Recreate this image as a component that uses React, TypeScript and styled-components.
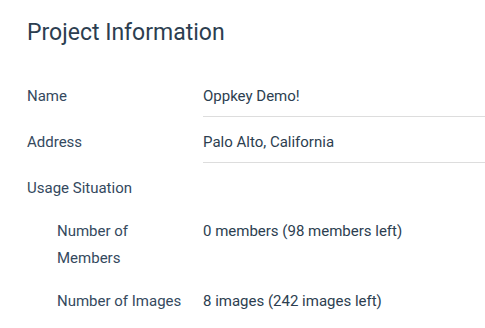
import * as React from 'react'
import styled, { createGlobalStyle } from 'styled-components'

const GlobalStyle = createGlobalStyle`
  body {
    margin: 0;
    background: #ffffff;
    font-family: Roboto, Lato, sans-serif;
    color: #2c3e50;
  }
`

const projectData = {
  name: 'Oppkey Demo!',
  address: 'Palo Alto, California',
  members: '0 members (98 members left)',
  images: '8 images (242 images left)',
}

const Panel = styled.div`
  padding: 16px 0 0 27px;
  width: 458px;
  overflow: hidden;
`

const Title = styled.h2`
  margin: 0 0 33px;
  font-size: 23px;
  font-weight: 400;
  line-height: 34px;
  color: #2c3e50;
`

const Row = styled.div<{ $indent?: boolean; $ruled?: boolean }>`
  display: grid;
  grid-template-columns: ${({ $indent }) => ($indent ? '146px 1fr' : '176px 1fr')};
  padding-left: ${({ $indent }) => ($indent ? '30px' : '0')};
  margin-bottom: ${({ $ruled }) => ($ruled ? '12px' : '16px')};
  font-size: 15px;
  line-height: 27px;

  & + & + &:not([data-ruled]) {
    margin-top: 1px;
  }
`

const Label = styled.div`
  padding-right: 16px;
  color: #34495e;
`

const Value = styled.div<{ $ruled?: boolean }>`
  color: #2c3e50;
  padding-bottom: ${({ $ruled }) => ($ruled ? '6px' : '0')};
  border-bottom: ${({ $ruled }) => ($ruled ? '1px solid #dddddd' : 'none')};
`

const App: React.FC = () => {
  return (
    <>
      <GlobalStyle />
      <Panel>
        <Title>Project Information</Title>
        <Row $ruled data-ruled>
          <Label>Name</Label>
          <Value $ruled>{projectData.name}</Value>
        </Row>
        <Row $ruled data-ruled>
          <Label>Address</Label>
          <Value $ruled>{projectData.address}</Value>
        </Row>
        <Row>
          <Label>Usage Situation</Label>
        </Row>
        <Row $indent>
          <Label>Number of Members</Label>
          <Value>{projectData.members}</Value>
        </Row>
        <Row $indent>
          <Label>Number of Images</Label>
          <Value>{projectData.images}</Value>
        </Row>
      </Panel>
    </>
  )
}

export default App
